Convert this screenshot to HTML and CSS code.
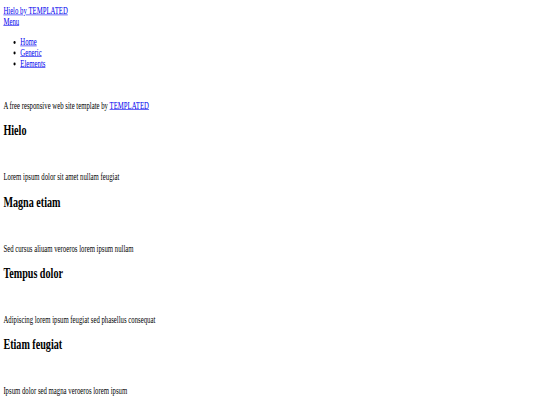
FILE: index.html
```html
<!DOCTYPE html>
<html>
<head>
<meta charset="utf-8">
<title>Hielo by TEMPLATED</title>
<link rel="stylesheet" href="styles.css">
</head>
<body>
<div class="page">
  <header class="site-header">
    <div class="logo"><a href="#">Hielo <span>by TEMPLATED</span></a></div>
    <a href="#">Menu</a>
  </header>
  <nav class="menu">
    <ul class="links">
      <li><a href="#">Home</a></li>
      <li><a href="#">Generic</a></li>
      <li><a href="#">Elements</a></li>
    </ul>
  </nav>
  <section class="banner">
    <article>
      <div class="img"></div>
      <div class="inner">
        <header>
          <p>A free responsive web site template by <a href="#">TEMPLATED</a></p>
          <h2>Hielo</h2>
        </header>
      </div>
    </article>
    <article>
      <div class="img"></div>
      <div class="inner">
        <header>
          <p>Lorem ipsum dolor sit amet nullam feugiat</p>
          <h2>Magna etiam</h2>
        </header>
      </div>
    </article>
    <article>
      <div class="img"></div>
      <div class="inner">
        <header>
          <p>Sed cursus aliuam veroeros lorem ipsum nullam</p>
          <h2>Tempus dolor</h2>
        </header>
      </div>
    </article>
    <article>
      <div class="img"></div>
      <div class="inner">
        <header>
          <p>Adipiscing lorem ipsum feugiat sed phasellus consequat</p>
          <h2>Etiam feugiat</h2>
        </header>
      </div>
    </article>
    <article>
      <div class="img"></div>
      <div class="inner">
        <header>
          <p>Ipsum dolor sed magna veroeros lorem ipsum</p>
          <h2>Lorem nullam</h2>
        </header>
      </div>
    </article>
  </section>
</div>
</body>
</html>
```
FILE: styles.css
```css
html, body {
  margin: 0;
  padding: 0;
  background: #ffffff;
  overflow: hidden;
}
.page {
  width: 1280px;
  padding: 10px 8px 8px;
  box-sizing: border-box;
  font-family: "Liberation Serif", "Times New Roman", serif;
  font-size: 16px;
  line-height: 1.15;
  color: #000;
  transform: scale(0.422, 0.585);
  transform-origin: 0 0;
}
a { color: #0000ee; }
.links {
  margin: 16px 0;
  padding-left: 40px;
}
.banner { padding-top: 2px; }
.img { height: 20px; }
p { margin: 16px 0; }
h2 {
  font-size: 24px;
  font-weight: bold;
  margin: 20px 0;
}
```
